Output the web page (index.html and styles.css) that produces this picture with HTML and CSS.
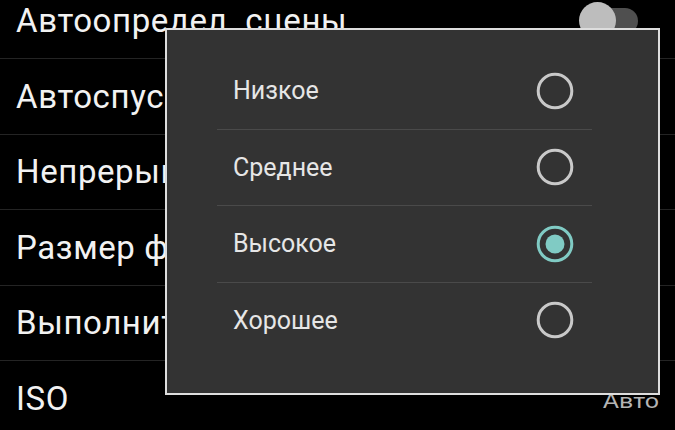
FILE: index.html
```html
<!DOCTYPE html>
<html lang="ru">
<head>
<meta charset="utf-8">
<title>Настройки камеры</title>
<link rel="stylesheet" href="styles.css">
</head>
<body>
<div class="screen">
  <ul class="prefs">
    <li class="pref">
      <span class="pref-title">Автоопредел. сцены</span>
      <span class="switch"><span class="track"></span><span class="thumb"></span></span>
    </li>
    <li class="pref"><span class="pref-title">Автоспуск</span></li>
    <li class="pref"><span class="pref-title">Непрерывная съемка</span></li>
    <li class="pref"><span class="pref-title">Размер фото</span></li>
    <li class="pref"><span class="pref-title">Выполнить</span></li>
    <li class="pref">
      <span class="pref-title">ISO</span>
      <span class="pref-value">Авто</span>
    </li>
  </ul>

  <div class="dialog">
    <ul class="options">
      <li class="option">
        <span class="option-label">Низкое</span>
        <svg class="radio" width="40" height="40" viewBox="0 0 40 40"><circle cx="20" cy="20" r="16.8" fill="none" stroke="#c9c9c9" stroke-width="3"/></svg>
      </li>
      <li class="option">
        <span class="option-label">Среднее</span>
        <svg class="radio" width="40" height="40" viewBox="0 0 40 40"><circle cx="20" cy="20" r="16.8" fill="none" stroke="#c9c9c9" stroke-width="3"/></svg>
      </li>
      <li class="option">
        <span class="option-label">Высокое</span>
        <svg class="radio" width="40" height="40" viewBox="0 0 40 40"><circle cx="20" cy="20" r="16.8" fill="none" stroke="#80cbc4" stroke-width="3"/><circle cx="20" cy="20" r="9.5" fill="#80cbc4"/></svg>
      </li>
      <li class="option">
        <span class="option-label">Хорошее</span>
        <svg class="radio" width="40" height="40" viewBox="0 0 40 40"><circle cx="20" cy="20" r="16.8" fill="none" stroke="#c9c9c9" stroke-width="3"/></svg>
      </li>
    </ul>
  </div>
</div>
</body>
</html>
```
FILE: styles.css
```css
html, body {
  margin: 0;
  padding: 0;
  background: #000;
}

body {
  width: 675px;
  height: 430px;
  overflow: hidden;
  font-family: Roboto, "Noto Sans", sans-serif;
}

.screen {
  position: relative;
  width: 675px;
  height: 430px;
  overflow: hidden;
}

.prefs {
  list-style: none;
  margin: -16.5px 0 0 0;
  padding: 0;
}

.pref {
  height: 74.5px;
  border-bottom: 1px solid #242424;
  display: flex;
  align-items: center;
  justify-content: space-between;
  padding: 0 16px;
  white-space: nowrap;
}

.pref-title {
  font-size: 33px;
  letter-spacing: 0.6px;
  color: #f2f2f2;
  line-height: 1;
}

.pref-value {
  font-size: 20px;
  color: #b4b4b4;
  display: inline-block;
  transform: scaleX(1.25);
  transform-origin: right center;
  padding-top: 6px;
}

.switch {
  position: relative;
  width: 59px;
  height: 37px;
  margin-right: 21px;
}

.switch .track {
  position: absolute;
  right: 0;
  top: 5.5px;
  width: 52px;
  height: 26px;
  border-radius: 13px;
  background: #4f4f4f;
}

.switch .thumb {
  position: absolute;
  left: 0;
  top: 0;
  width: 37px;
  height: 37px;
  border-radius: 50%;
  background: #bdbdbd;
}

.dialog {
  position: absolute;
  left: 165px;
  top: 28px;
  width: 375px;
  height: 340px;
  border: 2px solid #dedede;
  background: #333333;
  padding: 23px 66px 0 50px;
}

.options {
  list-style: none;
  margin: 0;
  padding: 0;
}

.option {
  height: 75.5px;
  display: flex;
  align-items: center;
  justify-content: space-between;
  padding: 0 17px 0 16px;
  border-bottom: 1.5px solid #4a4a4a;
}

.option:last-child {
  border-bottom: none;
}

.option-label {
  font-size: 25px;
  color: #e6e6e6;
}

.radio {
  display: block;
}
```
